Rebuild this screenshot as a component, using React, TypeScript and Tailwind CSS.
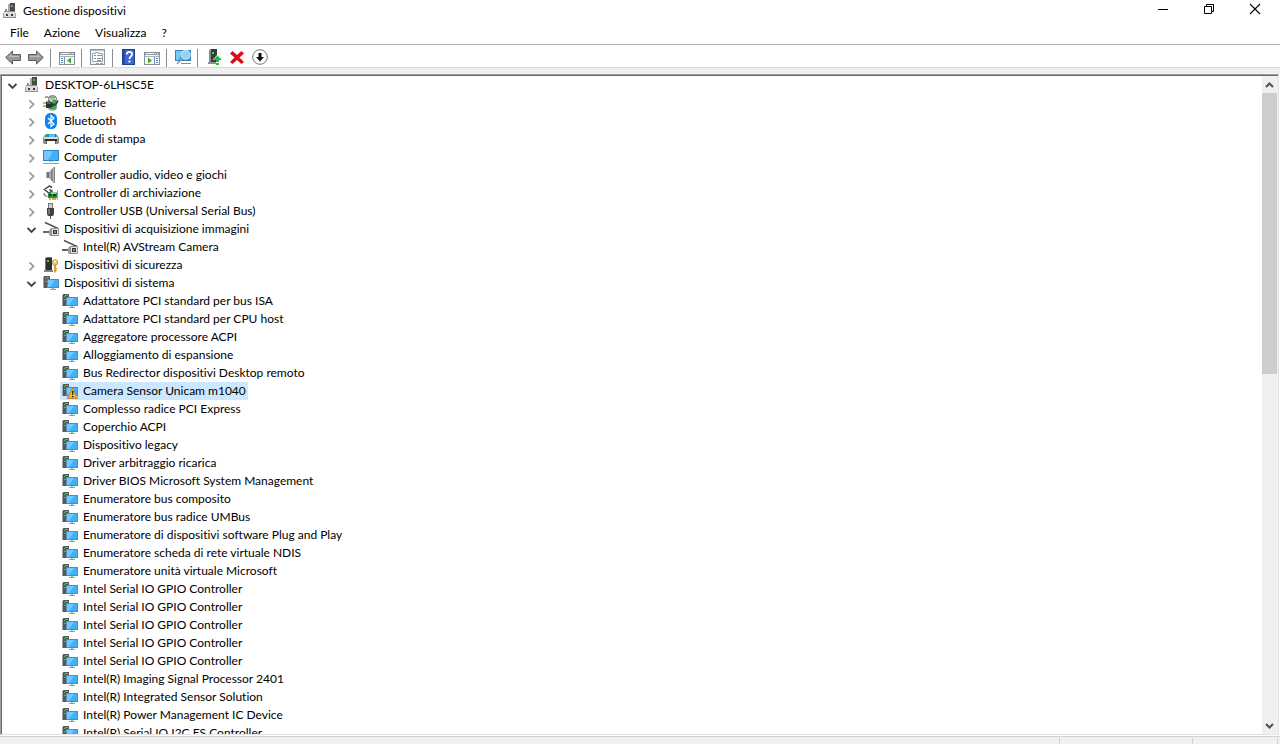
import { useState, type ReactNode } from "react";

type IconProps = { children: ReactNode };

function Icon({ children }: IconProps) {
  return (
    <svg viewBox="0 0 16 16" className="h-4 w-4 shrink-0" aria-hidden="true">
      {children}
    </svg>
  );
}

function ComputerRootIcon() {
  return (
    <Icon>
      <rect x="8" y="0" width="5" height="8" fill="#4a4a4a" />
      <rect x="6" y="1" width="2" height="7" fill="#a8a8a8" />
      <rect x="9" y="2" width="2" height="2" fill="#3fc54b" />
      <path d="M3 6h2v2H3z" fill="#8c8c8c" />
      <path d="M2 8h11v1H2z" fill="#8f8f8f" />
      <path d="M2 9h11l1 2v4H1v-4z" fill="#dcdcdc" />
      <path d="M1 10h1v5H1zM13 10h1v5h-1z" fill="#a8a8a8" />
      <path d="M4 11h2v2H4zM9 11h2v2H9z" fill="#3a3a3a" />
      <path d="M1 14h13v1H1z" fill="#8f8f8f" />
    </Icon>
  );
}

function BatteryIcon() {
  return (
    <Icon>
      <path d="M2 3Q2 1 5 2l2 2" fill="none" stroke="#555" strokeWidth="1" />
      <rect x="5.500" y="1" width="8" height="14" rx="2.500" fill="#e3eee3" stroke="#6b756b" strokeWidth=".8" />
      <path d="M6 4.500h7v7.500q0 2.500-3.500 2.500T6 12z" fill="#27b13c" />
      <path d="M7 4.500h2.500v8H7z" fill="#c9f4cb" opacity=".8" />
      <ellipse cx="9.500" cy="2" rx="3.200" ry="1.200" fill="#b3bdb3" stroke="#555" strokeWidth=".6" />
      <path d="M0 8h3M0 11h3" stroke="#b99a3b" strokeWidth="1.300" />
      <path d="M3 6.500h3q4 0 4.500 3-.5 3.500-4.500 3.500H3z" fill="#2f2f2f" />
      <path d="M4 7.500h3l2 1H4z" fill="#8b8b8b" />
      <path d="M10 10q3.500 0 5-4.500" fill="none" stroke="#333" strokeWidth="1.300" />
    </Icon>
  );
}

function BluetoothIcon() {
  return (
    <Icon>
      <rect x="2" y="0" width="12" height="16" rx="5.500" fill="#0a84f4" />
      <path d="M5 5l6 6-3 2.500v-11L11 5l-6 6" fill="none" stroke="#fff" strokeWidth="1.200" />
    </Icon>
  );
}

function PrinterIcon() {
  return (
    <Icon>
      <path d="M1 5l2-2h10l2 2v2H1z" fill="#8b9096" />
      <path d="M3 3h5v3H3z" fill="#2b9a94" />
      <path d="M6 3h6v3H6z" fill="#5bbcf0" />
      <path d="M12 3h1v3h-1z" fill="#2c7a63" />
      <path d="M0 6h16v6l-1 1H1l-1-1z" fill="#8f8f8f" />
      <path d="M1 6h14v2H1z" fill="#dedede" />
      <path d="M2 8h12v2H2z" fill="#303030" />
      <path d="M3 10h10v4H3z" fill="#fff" />
      <path d="M3 10h1v3H3zM12 10h1v3h-1z" fill="#5e5e5e" />
    </Icon>
  );
}

function MonitorIcon() {
  return (
    <Icon>
      <rect x=".5" y="1.500" width="15" height="10" fill="#3fb0fb" stroke="#2e86c1" />
      <path d="M1 2h9L5 11H1z" fill="#74c8ff" />
      <path d="M6 12h4v1H6z" fill="#c6d0d6" />
      <path d="M0 14h16v1H0z" fill="#8aa5b6" />
    </Icon>
  );
}

function SpeakerIcon() {
  return (
    <Icon>
      <path d="M3 5h3v6H3z" fill="#6d7379" />
      <path d="M3 5h1v6H3z" fill="#b4b9bd" />
      <path d="M6 5l4-4v14l-4-4z" fill="#a4a9ae" />
      <path d="M8 3l2-2v14l-2-2z" fill="#83898e" />
      <path d="M10 0h2v16h-2z" fill="#b3b8bc" />
      <path d="M11 0h1v16h-1z" fill="#7d8389" />
    </Icon>
  );
}

function StorageIcon() {
  return (
    <Icon>
      <path d="M9 2.500L6.500 1 1.500 4.500 6 8l3-2-2.500-1.500" fill="none" stroke="#4e4e4e" strokeWidth="1.500" />
      <path d="M1 8Q1 11 4.500 11.500" fill="none" stroke="#777" strokeWidth="1.200" />
      <path d="M5 7.500h9V13H5z" fill="#258c4a" />
      <path d="M6 9h2v2H6zM10 9h3v2h-3z" fill="#173d2a" />
      <path d="M8 8h5v1H8z" fill="#a3d8b5" />
      <path d="M14 5h1v10h-1z" fill="#a6a6a6" />
      <path d="M6 13h2v2H6zM9 13h4v2H9z" fill="#e8a91e" />
    </Icon>
  );
}

function UsbIcon() {
  return (
    <Icon>
      <rect x="5.500" y=".5" width="4" height="5" fill="#d1d1d1" stroke="#777" />
      <path d="M4 5h7v5q0 3-2 3H6q-2 0-2-3z" fill="#414141" />
      <path d="M5 6h2v5H5z" fill="#777" />
      <path d="M7 13h1v3H7z" fill="#555" />
    </Icon>
  );
}

function CameraIcon() {
  return (
    <Icon>
      <path d="M2 1.500l13 6" stroke="#555" strokeWidth="1.500" />
      <path d="M0 10h6v2H0z" fill="#666" />
      <path d="M6 9l2-2h7v8H7l-1-1z" fill="#9da1a4" />
      <path d="M8.500 7.500h7v7h-7z" fill="#e4e6e7" stroke="#8c9093" />
      <path d="M10 9h4v4h-4z" fill="#34383a" />
      <path d="M11 10h2v2h-2z" fill="#5fa3a8" />
    </Icon>
  );
}

function SecurityIcon() {
  return (
    <Icon>
      <path d="M2 1l2-1h5v14H2z" fill="#777" />
      <path d="M3 1h6v13H3z" fill="#2d302e" />
      <path d="M4 3h2v2H4z" fill="#37df49" />
      <path d="M1 13h9v2H1z" fill="#858585" />
      <path d="M11 8h2v7l-1 1-1-1z" fill="#d3a13b" />
      <circle cx="12" cy="5.500" r="2.800" fill="#f0c76d" stroke="#b78930" strokeWidth=".8" />
      <circle cx="12" cy="4.500" r=".9" fill="#fff" />
      <path d="M13 11h1v1h-1zM13 13h1v1h-1z" fill="#b78930" />
    </Icon>
  );
}

function SystemIcon({ warning = false }: { warning?: boolean }) {
  return (
    <Icon>
      <path d="M1 1h6v12H1z" fill="#55595b" />
      <path d="M0 2h1v11H0z" fill="#a3a6a8" />
      <path d="M3 2h3v1H3zM2 6h2v1H2z" fill="#8e9294" />
      <path d="M2 3h1v1H2z" fill="#46ce55" />
      <rect x="4.500" y="4.500" width="11" height="8" fill="#3fb0fb" stroke="#4b8fbb" />
      <path d="M5 5h7l-5 7H5z" fill="#74c8ff" />
      <path d="M9 13h2v1H9zM7 14h6v1H7z" fill="#90a5b1" />
      {warning && (
        <g>
          <path
            d="M10.500 5l5.200 10.300H5.200z"
            fill="#fcb62c"
            stroke="#ad751c"
            strokeWidth=".9"
            strokeLinejoin="round"
          />
          <path d="M10 8h1.400l-.3 4h-.8zM10 13h1.300v1.300H10z" fill="#111" />
        </g>
      )}
    </Icon>
  );
}

function ArrowIcon({ forward = false }: { forward?: boolean }) {
  return (
    <Icon>
      <path
        d={forward ? "M15.3 8.500L8.500 2v3.500h-8v6h8V15z" : "M.7 8.500L7.500 2v3.500h8v6h-8V15z"}
        fill="#999"
        stroke="#5b5b5b"
        strokeWidth="1"
      />
      <path d={forward ? "M2 7h7.500V5l3 3H2z" : "M14 7H6.500V5l-3 3H14z"} fill="#bdbdbd" />
    </Icon>
  );
}

function PaneIcon({ right = false }: { right?: boolean }) {
  return (
    <Icon>
      <rect x=".5" y="3.500" width="15" height="12" fill="#f8f8f8" stroke="#87909a" />
      <path d="M1 4h14v2H1z" fill="#939ca7" />
      <path d="M2 4h8v1H2zM11 4h1v1h-1zM13 4h1v1h-1z" fill="#f4f4f4" />
      <path d="M1 7h14v1H1z" fill="#aab2ba" />
      {right ? (
        <g>
          <path d="M10 8h1v7h-1z" fill="#87909a" />
          <path d="M12 9h2v1h-2zM12 11h2v1h-2zM12 13h2v1h-2z" fill="#4c8fc6" />
          <path d="M4 8.500l4 3-4 3z" fill="#3bab35" />
        </g>
      ) : (
        <g>
          <path d="M5 8h1v7H5z" fill="#87909a" />
          <path d="M2 9h2v1H2zM2 11h2v1H2zM2 13h2v1H2z" fill="#4c8fc6" />
          <path d="M12 8.500l-4 3 4 3z" fill="#3bab35" />
        </g>
      )}
    </Icon>
  );
}

function PropertiesIcon() {
  return (
    <Icon>
      <rect x=".5" y=".5" width="14" height="15" fill="#f1f3f4" stroke="#8c949b" />
      <path d="M1 1h13v1H1z" fill="#bac1c7" />
      <path d="M2.500 4.500h3v-1h3v1h4v8h-10z" fill="#fff" stroke="#a0a8ae" />
      <path d="M4 6h2v1H4zM4 9h2v1H4z" fill="#38a8c8" />
      <path d="M7 6h5v1H7zM7 9h5v1H7zM7 11h4v1H7z" fill="#8b949c" />
      <path d="M6 14h3v1H6z" fill="#48c6dc" />
      <path d="M10 14h3v1h-3z" fill="#9aa1a8" />
    </Icon>
  );
}

function HelpIcon() {
  return (
    <Icon>
      <rect x="1.500" y=".5" width="12" height="15" fill="#3e66cf" stroke="#233f94" />
      <path d="M2 1h2v14H2z" fill="#2a4bab" />
      <path
        d="M5.800 5.500C5.800 2 11 2.200 11 5.300c0 2-2.500 2.200-2.500 4.700"
        fill="none"
        stroke="#fff"
        strokeWidth="1.800"
      />
      <path d="M7.500 11.500h2v2h-2z" fill="#fff" />
    </Icon>
  );
}

function ScanIcon() {
  return (
    <Icon>
      <rect x=".5" y="1.500" width="15" height="10" fill="#42a4df" stroke="#3783b4" />
      <path d="M1 2h6L4 11H1z" fill="#78c9f3" />
      <path d="M6 14.500h10" stroke="#78909f" />
      <path d="M8 9l-6 6" stroke="#8a989f" strokeWidth="1.600" />
      <circle cx="10.700" cy="5.800" r="4.400" fill="#8fd2f8" stroke="#c9dde8" strokeWidth="1.200" />
    </Icon>
  );
}

function UpdateDriverIcon() {
  return (
    <Icon>
      <path d="M3 1l2-1h6v13H3z" fill="#898989" />
      <path d="M5 0h6v13H5z" fill="#393c3b" />
      <path d="M6 3h2v2H6z" fill="#36e249" />
      <path d="M2 13h8v2H2z" fill="#909090" />
      <path d="M11.500 5.500l5 5.500h-10z" fill="#fff" />
      <path d="M11.500 6.500l4.500 4.500h-3v1h-3v-1H7z" fill="#20bd35" />
      <path d="M10 12h3v1h-3zM10 14h3v2h-3z" fill="#20bd35" />
    </Icon>
  );
}

function UninstallIcon() {
  return (
    <Icon>
      <path
        d="M1 4.500L3.500 2l4.500 4L12.500 2 15 4.500 10.500 8.500 15 13l-2.500 2L8 11l-4.500 4L1 13l4.500-4.500z"
        fill="#e00b18"
      />
    </Icon>
  );
}

function DisableIcon() {
  return (
    <Icon>
      <circle cx="8" cy="8" r="7.300" fill="#fff" stroke="#777" strokeWidth="1" />
      <path d="M6.500 4h3v4H12l-4 4.500L4 8h2.500z" fill="#111" />
    </Icon>
  );
}

function Chevron({ open }: { open: boolean }) {
  return (
    <svg viewBox="0 0 19 18" className="block h-[18px] w-[19px]" fill="none" aria-hidden="true">
      {open ? (
        <path d="M5.500 7.800l4 4 4-4" stroke="#404040" strokeWidth="1.900" />
      ) : (
        <path d="M7.500 6.300l4 4-4 4" stroke="#a0a0a0" strokeWidth="1.900" />
      )}
    </svg>
  );
}

type Device = { name: string; icon: ReactNode; children?: Device[]; open?: boolean };

const system = (name: string): Device => ({ name, icon: <SystemIcon /> });

const tree: Device[] = [
  { name: "Batterie", icon: <BatteryIcon /> },
  { name: "Bluetooth", icon: <BluetoothIcon /> },
  { name: "Code di stampa", icon: <PrinterIcon /> },
  { name: "Computer", icon: <MonitorIcon /> },
  { name: "Controller audio, video e giochi", icon: <SpeakerIcon /> },
  { name: "Controller di archiviazione", icon: <StorageIcon /> },
  { name: "Controller USB (Universal Serial Bus)", icon: <UsbIcon /> },
  {
    name: "Dispositivi di acquisizione immagini",
    icon: <CameraIcon />,
    open: true,
    children: [{ name: "Intel(R) AVStream Camera", icon: <CameraIcon /> }],
  },
  { name: "Dispositivi di sicurezza", icon: <SecurityIcon /> },
  {
    name: "Dispositivi di sistema",
    icon: <SystemIcon />,
    open: true,
    children: [
      system("Adattatore PCI standard per bus ISA"),
      system("Adattatore PCI standard per CPU host"),
      system("Aggregatore processore ACPI"),
      system("Alloggiamento di espansione"),
      system("Bus Redirector dispositivi Desktop remoto"),
      { name: "Camera Sensor Unicam m1040", icon: <SystemIcon warning /> },
      system("Complesso radice PCI Express"),
      system("Coperchio ACPI"),
      system("Dispositivo legacy"),
      system("Driver arbitraggio ricarica"),
      system("Driver BIOS Microsoft System Management"),
      system("Enumeratore bus composito"),
      system("Enumeratore bus radice UMBus"),
      system("Enumeratore di dispositivi software Plug and Play"),
      system("Enumeratore scheda di rete virtuale NDIS"),
      system("Enumeratore unità virtuale Microsoft"),
      system("Intel Serial IO GPIO Controller"),
      system("Intel Serial IO GPIO Controller"),
      system("Intel Serial IO GPIO Controller"),
      system("Intel Serial IO GPIO Controller"),
      system("Intel Serial IO GPIO Controller"),
      system("Intel(R) Imaging Signal Processor 2401"),
      system("Intel(R) Integrated Sensor Solution"),
      system("Intel(R) Power Management IC Device"),
      system("Intel(R) Serial IO I2C ES Controller"),
    ],
  },
];

type NodeProps = {
  device: Device;
  path: string;
  leaf?: boolean;
  selected: string;
  onSelect: (path: string) => void;
};

function TreeNode({ device, path, leaf = false, selected, onSelect }: NodeProps) {
  const [open, setOpen] = useState(device.open ?? false);
  const active = selected === path;
  return (
    <li>
      <div className="flex h-[18px] items-center">
        {leaf ? (
          <span className="w-[19px]" />
        ) : (
          <button
            type="button"
            aria-label={open ? "Comprimi" : "Espandi"}
            aria-expanded={open}
            onClick={() => setOpen(!open)}
          >
            <Chevron open={open} />
          </button>
        )}
        <button
          type="button"
          onClick={() => onSelect(path)}
          className={
            active
              ? "flex h-[18px] items-center gap-[5px] bg-[#cce8ff] pr-0.5 pl-0.5 whitespace-nowrap"
              : "flex h-[18px] items-center gap-[5px] pr-0.5 pl-0.5 whitespace-nowrap"
          }
        >
          {device.icon}
          <span>{device.name}</span>
        </button>
      </div>
      {open && device.children && (
        <ul className="pl-[19px]">
          {device.children.map((child, i) => (
            <TreeNode
              key={i}
              device={child}
              path={`${path}/${i}`}
              leaf={!child.children && path !== "root"}
              selected={selected}
              onSelect={onSelect}
            />
          ))}
        </ul>
      )}
    </li>
  );
}

function ToolButton({ label, children }: { label: string; children: ReactNode }) {
  return (
    <button type="button" aria-label={label} className="flex h-[18px] w-[23px] items-start pl-1 hover:bg-[#e5f3ff]">
      {children}
    </button>
  );
}

function Separator() {
  return <span className="mr-1 ml-[3px] h-[18px] w-px bg-[#8c8c8c]" />;
}

const root: Device = { name: "DESKTOP-6LHSC5E", icon: <ComputerRootIcon />, open: true, children: tree };

export default function App() {
  const [selected, setSelected] = useState("root/9/5");
  return (
    <div className="flex h-screen flex-col overflow-hidden bg-white font-['Lato','Open_Sans',sans-serif] text-[12px] leading-[18px] text-black [font-variant-ligatures:none]">
      <header className="flex h-[22px] shrink-0 items-start justify-between">
        <div className="flex items-center gap-[5px] pt-0.5 pl-0.5">
          <ComputerRootIcon />
          <h1>Gestione dispositivi</h1>
        </div>
        <div className="flex pr-0.5">
          <button type="button" aria-label="Riduci a icona" className="flex h-5 w-[46px] justify-center pt-0.5">
            <Icon>
              <path d="M3 7.500h10" stroke="#000" />
            </Icon>
          </button>
          <button type="button" aria-label="Ripristina" className="flex h-5 w-[46px] justify-center pt-0.5">
            <Icon>
              <path d="M3.500 4.500h7v7h-7zM5.500 4.500v-2h7v7h-2" fill="none" stroke="#000" />
            </Icon>
          </button>
          <button type="button" aria-label="Chiudi" className="flex h-5 w-[46px] justify-center pt-0.5">
            <Icon>
              <path d="M3 2l10 10M13 2L3 12" stroke="#000" strokeWidth="1.100" />
            </Icon>
          </button>
        </div>
      </header>

      <nav className="flex h-[22px] shrink-0 items-center gap-[15px] pl-2.5">
        <button type="button">File</button>
        <button type="button">Azione</button>
        <button type="button">Visualizza</button>
        <button type="button">?</button>
      </nav>

      <div className="flex h-6 shrink-0 items-start border-y border-t-[#b0b0b0] border-b-[#d9d9d9] pt-1 pl-px">
        <ToolButton label="Indietro"><ArrowIcon /></ToolButton>
        <ToolButton label="Avanti"><ArrowIcon forward /></ToolButton>
        <Separator />
        <ToolButton label="Mostra albero console"><PaneIcon /></ToolButton>
        <Separator />
        <ToolButton label="Proprietà"><PropertiesIcon /></ToolButton>
        <Separator />
        <ToolButton label="Guida"><HelpIcon /></ToolButton>
        <ToolButton label="Mostra riquadro azioni"><PaneIcon right /></ToolButton>
        <Separator />
        <ToolButton label="Rileva modifiche hardware"><ScanIcon /></ToolButton>
        <Separator />
        <ToolButton label="Aggiorna driver"><UpdateDriverIcon /></ToolButton>
        <ToolButton label="Disinstalla dispositivo"><UninstallIcon /></ToolButton>
        <ToolButton label="Disabilita dispositivo"><DisableIcon /></ToolButton>
      </div>

      <div className="h-1.5 shrink-0 bg-[#f0f0f0]" />

      <main className="mr-px flex min-h-0 flex-1 border border-t-[#a0a0a0] border-r-[#e3e3e3] border-b-[#e3e3e3] border-l-[#a0a0a0]">
        <div className="min-w-0 flex-1 overflow-hidden border-t border-l border-[#696969] pl-px">
          <ul>
            <TreeNode device={root} path="root" selected={selected} onSelect={setSelected} />
          </ul>
        </div>
        <div className="flex w-4 shrink-0 flex-col border-t border-t-[#696969] bg-[#f0f0f0]">
          <button type="button" aria-label="Scorri su" className="flex h-[17px] shrink-0 justify-center">
            <svg viewBox="0 0 16 17" className="h-[17px] w-4" fill="none" aria-hidden="true">
              <path d="M4 11l3.500-3.500L11 11" stroke="#505050" strokeWidth="2" />
            </svg>
          </button>
          <div className="flex min-h-0 flex-1 flex-col">
            <div className="mr-px h-[45%] bg-[#cdcdcd]" />
          </div>
          <button type="button" aria-label="Scorri giù" className="flex h-[17px] shrink-0 justify-center">
            <svg viewBox="0 0 16 17" className="h-[17px] w-4" fill="none" aria-hidden="true">
              <path d="M4 7l3.500 3.500L11 7" stroke="#505050" strokeWidth="2" />
            </svg>
          </button>
        </div>
      </main>

      <footer className="mt-px flex h-2 shrink-0 justify-end border-t border-[#d0d0d0] bg-[#f0f0f0] pt-px pr-0.5">
        <div className="w-[133px] border-l border-[#d0d0d0]" />
        <div className="w-[86px] border-x border-[#d0d0d0]" />
      </footer>
    </div>
  );
}
